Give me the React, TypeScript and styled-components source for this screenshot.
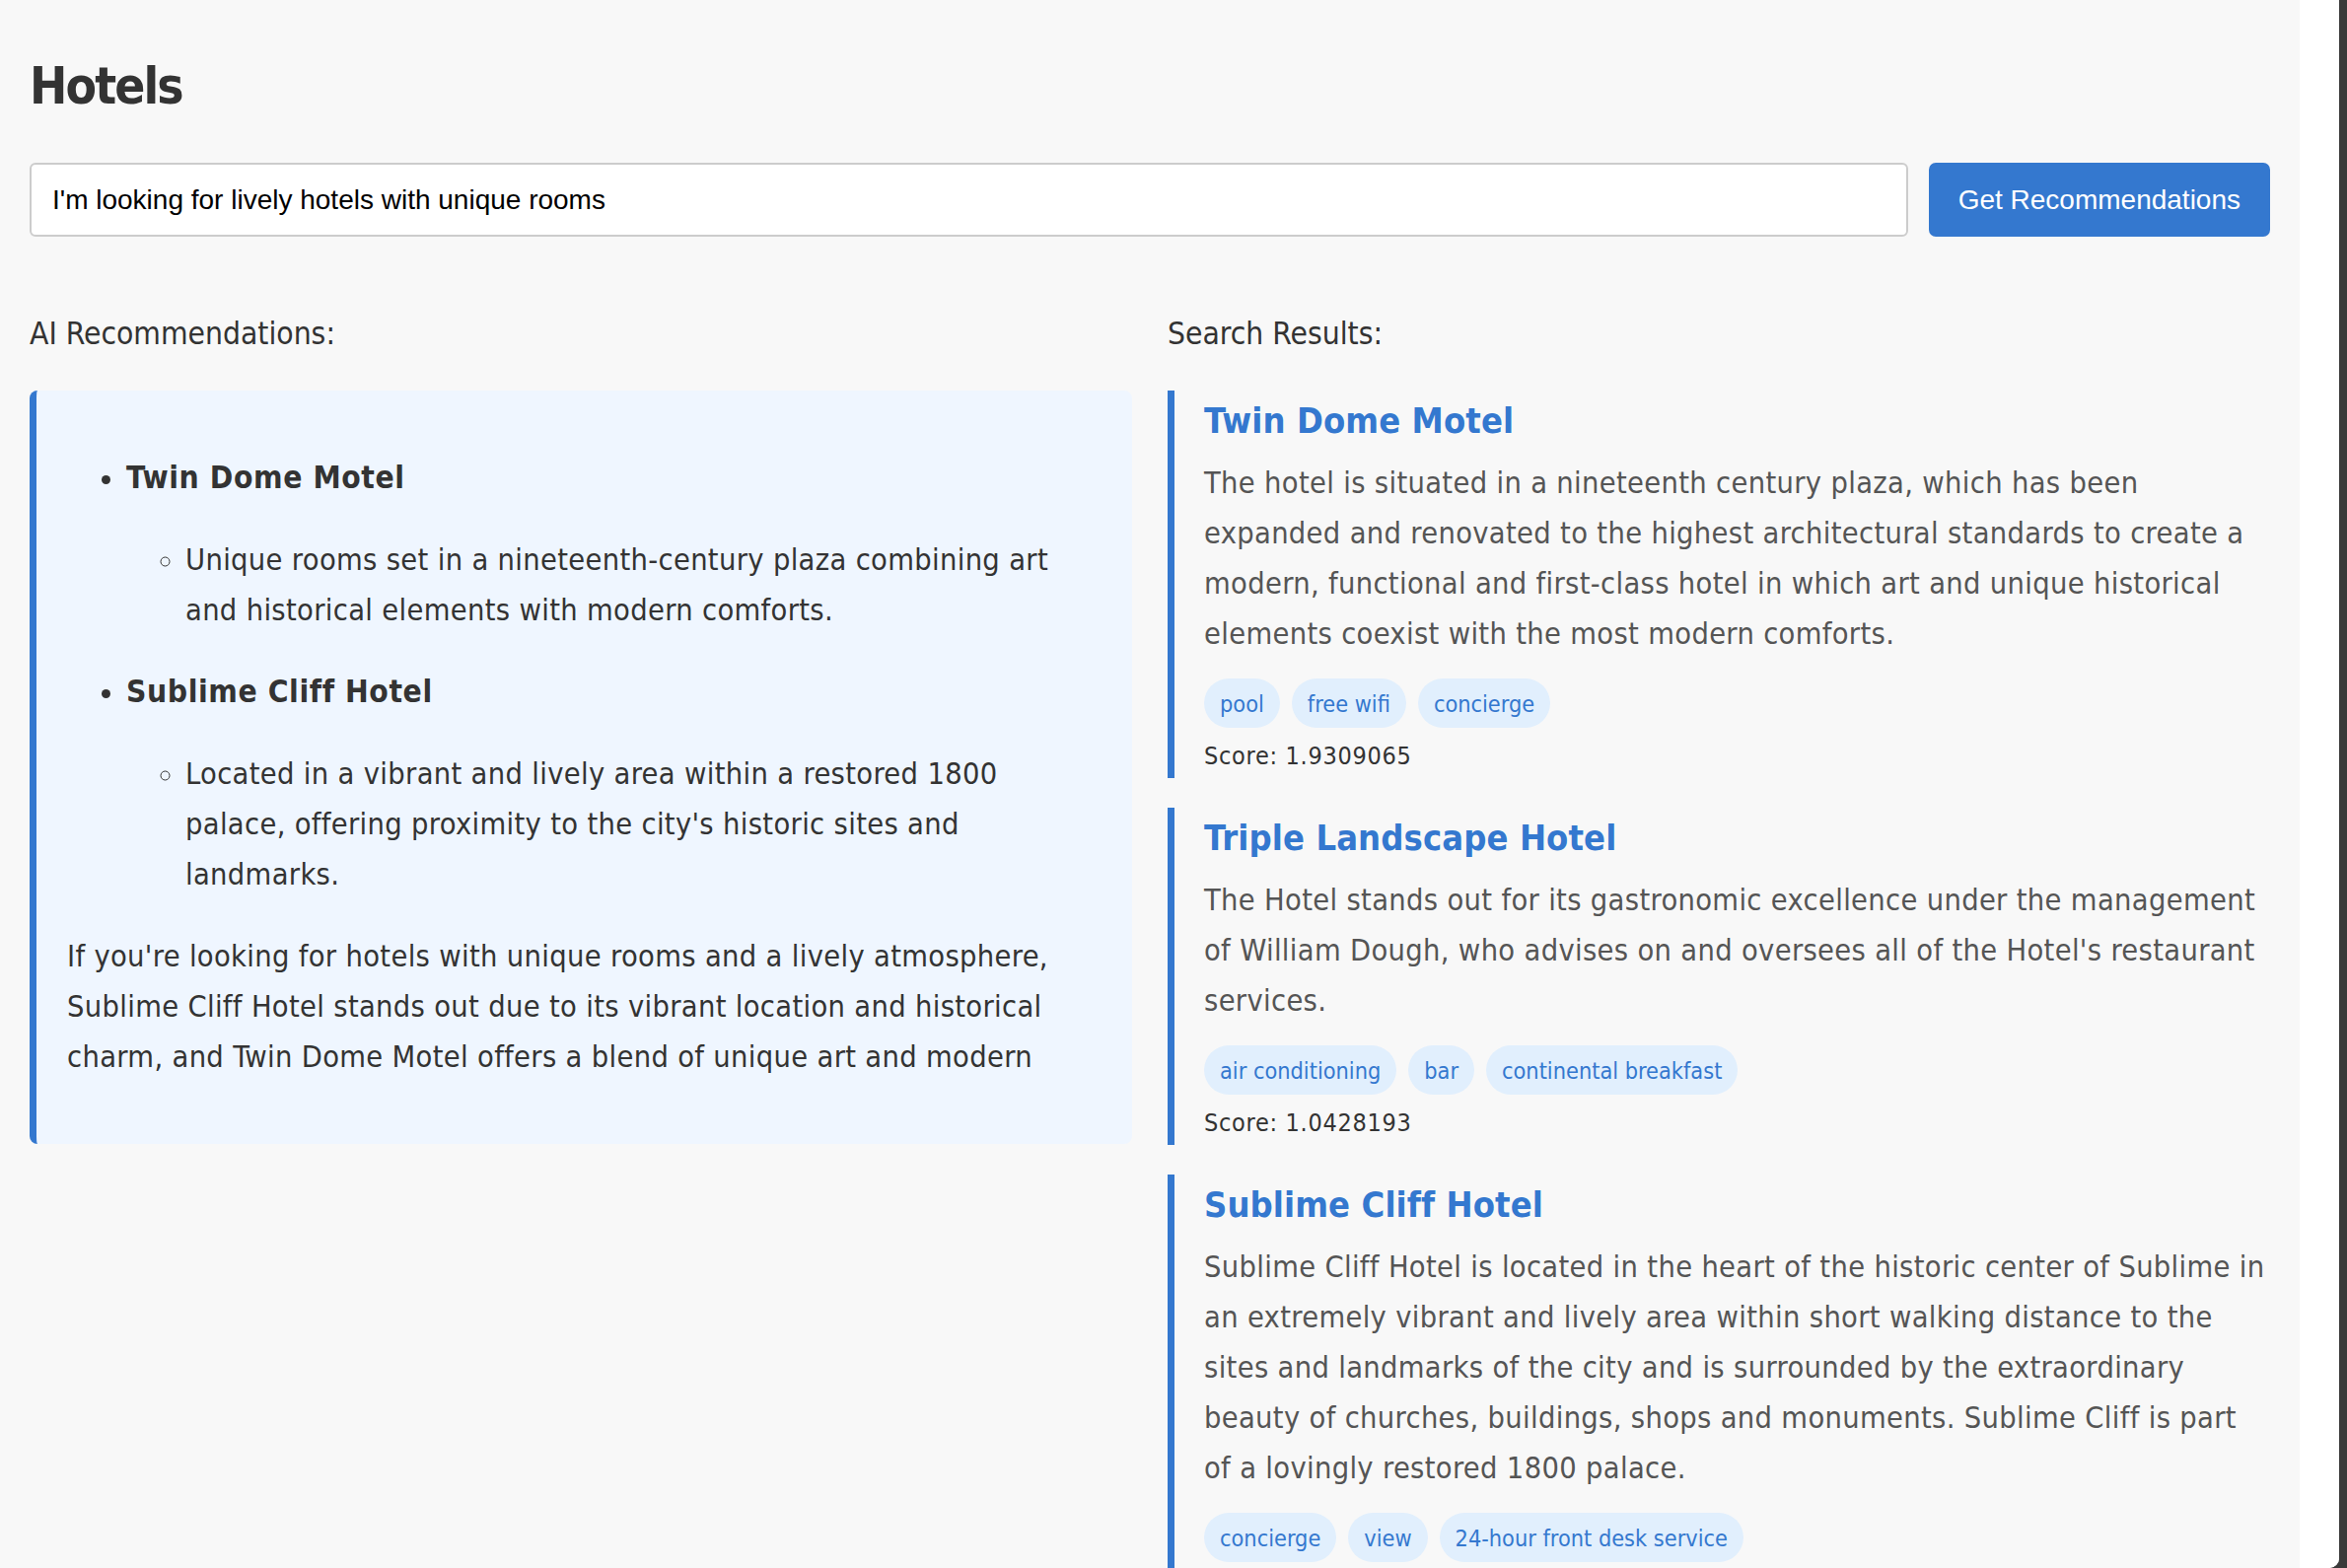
import React from "react";
import styled, { createGlobalStyle } from "styled-components";

const Global = createGlobalStyle`
  html, body { margin: 0; padding: 0; }
  body {
    background: #3a3a3a;
    font-family: "DejaVu Sans Condensed", "DejaVu Sans", sans-serif;
    font-stretch: condensed;
    color: #333;
    overflow: hidden;
  }
  * { box-sizing: border-box; }
`;

const Frame = styled.div`
  display: flex;
  width: calc(100vw - 8px);
  height: 100vh;
  background: #ffffff;
  border-bottom-right-radius: 10px;
  overflow: hidden;
`;

const Main = styled.main`
  flex: none;
  width: 2332px;
  height: 100%;
  overflow: hidden;
  background: #f8f8f8;
  padding: 0 30px;
  box-shadow: 1px 0 8px rgba(0, 0, 0, 0.06);
`;

const Side = styled.div`
  flex: 1;
  background: #ffffff;
`;

const Title = styled.h1`
  margin: 57px 0 47px;
  font-size: 51px;
  line-height: 61px;
  letter-spacing: -1.9px;
  font-weight: bold;
  color: #333;
`;

const SearchRow = styled.div`
  display: flex;
  gap: 21px;
  align-items: stretch;
`;

const Input = styled.input`
  flex: 1;
  height: 75px;
  border: 2px solid #cccccc;
  border-radius: 6px;
  background: #fff;
  padding: 0 21px;
  font-family: "Liberation Sans", Arial, sans-serif;
  font-size: 28px;
  color: #000;
  outline: none;
`;

const Button = styled.button`
  height: 75px;
  padding: 0 30px;
  border: none;
  border-radius: 7px;
  background: #3478cf;
  color: #fff;
  font-family: "Liberation Sans", Arial, sans-serif;
  font-size: 28px;
  cursor: pointer;
`;

const Columns = styled.div`
  display: grid;
  grid-template-columns: 1fr 1fr;
  column-gap: 36px;
  margin-top: 80px;
  align-items: start;
`;

const Column = styled.section`
  display: flex;
  flex-direction: column;
`;

const ColumnTitle = styled.h2`
  margin: 0 0 39px;
  font-size: 31.5px;
  line-height: 37px;
  font-weight: normal;
  color: #333;
`;

const AIBox = styled.div`
  background: #eff6ff;
  border-left: 7px solid #3478cf;
  border-radius: 8px;
  padding: 31px 45px 31px 31px;
  font-size: 30.5px;
  letter-spacing: 0.33px;
  line-height: 51px;
  color: #333;

  ul {
    margin: 32px 0;
    padding-left: 60px;
  }
  ul ul {
    margin: 0;
    list-style-type: circle;
  }
  p {
    margin: 32px 0;
  }
  strong {
    font-weight: bold;
    font-size: 31.5px;
    letter-spacing: 0.6px;
  }
`;

const Cards = styled.div`
  display: flex;
  flex-direction: column;
  gap: 30px;
`;

const Card = styled.article`
  border-left: 7px solid #3478cf;
  padding: 9px 0 8px 30px;
`;

const CardTitle = styled.h3`
  margin: 0 0 16px;
  font-size: 36px;
  letter-spacing: 0.1px;
  line-height: 43px;
  font-weight: bold;
  color: #3478cf;
`;

const Desc = styled.p`
  margin: 0 2.5px 20px 0;
  font-size: 30.5px;
  letter-spacing: 0.33px;
  line-height: 51px;
  color: #555;
`;

const Tags = styled.div`
  display: flex;
  flex-wrap: wrap;
  gap: 12px;
`;

const Tag = styled.span`
  display: inline-flex;
  align-items: center;
  height: 50px;
  padding: 0 16px;
  border-radius: 25px;
  background: #e1effd;
  color: #3478cf;
  font-size: 23.3px;
`;

const Score = styled.div`
  margin-top: 14px;
  font-size: 25px;
  letter-spacing: 0.7px;
  line-height: 29px;
  color: #333;
`;

const hotels = [
  {
    name: "Twin Dome Motel",
    desc:
      "The hotel is situated in a nineteenth century plaza, which has been expanded and renovated to the highest architectural standards to create a modern, functional and first-class hotel in which art and unique historical elements coexist with the most modern comforts.",
    tags: ["pool", "free wifi", "concierge"],
    score: "1.9309065",
  },
  {
    name: "Triple Landscape Hotel",
    desc:
      "The Hotel stands out for its gastronomic excellence under the management of William Dough, who advises on and oversees all of the Hotel's restaurant services.",
    tags: ["air conditioning", "bar", "continental breakfast"],
    score: "1.0428193",
  },
  {
    name: "Sublime Cliff Hotel",
    desc:
      "Sublime Cliff Hotel is located in the heart of the historic center of Sublime in an extremely vibrant and lively area within short walking distance to the sites and landmarks of the city and is surrounded by the extraordinary beauty of churches, buildings, shops and monuments. Sublime Cliff is part of a lovingly restored 1800 palace.",
    tags: ["concierge", "view", "24-hour front desk service"],
    score: "0.9876543",
  },
];

export default function App() {
  return (
    <>
      <Global />
      <Frame>
        <Main>
          <Title>Hotels</Title>
          <SearchRow>
            <Input defaultValue="I'm looking for lively hotels with unique rooms" />
            <Button>Get Recommendations</Button>
          </SearchRow>
          <Columns>
            <Column>
              <ColumnTitle>AI Recommendations:</ColumnTitle>
              <AIBox>
                <ul>
                  <li>
                    <p>
                      <strong>Twin Dome Motel</strong>
                    </p>
                    <ul>
                      <li>
                        Unique rooms set in a nineteenth-century plaza combining art and
                        historical elements with modern comforts.
                      </li>
                    </ul>
                  </li>
                  <li>
                    <p>
                      <strong>Sublime Cliff Hotel</strong>
                    </p>
                    <ul>
                      <li>
                        Located in a vibrant and lively area within a restored 1800 palace,
                        offering proximity to the city's historic sites and landmarks.
                      </li>
                    </ul>
                  </li>
                </ul>
                <p>
                  If you're looking for hotels with unique rooms and a lively atmosphere,
                  Sublime Cliff Hotel stands out due to its vibrant location and historical
                  charm, and Twin Dome Motel offers a blend of unique art and modern
                </p>
              </AIBox>
            </Column>
            <Column>
              <ColumnTitle>Search Results:</ColumnTitle>
              <Cards>
                {hotels.map((h) => (
                  <Card key={h.name}>
                    <CardTitle>{h.name}</CardTitle>
                    <Desc>{h.desc}</Desc>
                    <Tags>
                      {h.tags.map((t) => (
                        <Tag key={t}>{t}</Tag>
                      ))}
                    </Tags>
                    <Score>Score: {h.score}</Score>
                  </Card>
                ))}
              </Cards>
            </Column>
          </Columns>
        </Main>
        <Side />
      </Frame>
    </>
  );
}
